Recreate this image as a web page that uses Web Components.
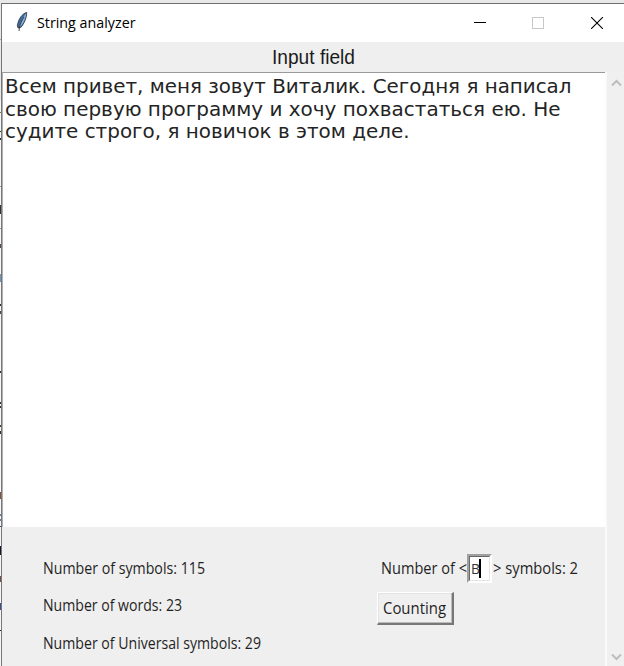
<!DOCTYPE html>
<html lang="en">
<head>
<meta charset="utf-8">
<title>String analyzer</title>
<style>
html,body{margin:0;height:100%;overflow:hidden}
body{background:#e8e8e8}
</style>
</head>
<body>
<analyzer-desktop></analyzer-desktop>
<script>
const define = (name, html, setup) => customElements.define(name, class extends HTMLElement {
  connectedCallback() {
    if (this.shadowRoot) return;
    const t = document.createElement('template');
    t.innerHTML = html;
    this.attachShadow({mode: 'open'}).append(t.content.cloneNode(true));
    if (setup) setup(this, this.shadowRoot);
  }
});

/* One line of text condensed or widened to the advance given in "w". */
define('fit-text', `<style>
:host{display:block;white-space:nowrap;flex:none}
span{display:inline-block;transform-origin:0 50%}
</style><span><slot></slot></span>`, (host, root) => {
  const w = +host.getAttribute('w');
  const s = root.querySelector('span');
  host.style.width = w + 'px';
  s.style.transform = 'scaleX(' + w / s.getBoundingClientRect().width + ')';
});

define('title-bar', `<style>
:host{display:flex;height:38px;background:#fff;align-items:center;color:#000;font:15px/20px "Open Sans","Noto Sans",sans-serif}
.icon{width:16px;height:22px;margin:-2px 7px 0 12px}
fit-text{margin-top:-2px}
.gap{flex:1}
.ctl{width:58.5px;display:flex;justify-content:center;position:relative;left:2px}
</style>
<svg class="icon" viewBox="0 0 16 22"><path d="M12.7 1.5C8.2 2.6 4.3 8 3.3 14.8l.8 2.2 2.6-.5c3.4-3.6 6-9.6 6-15Z" fill="#3f6a9b"/><path d="M12.3 1.8C9.6 5 7.4 9.5 5.3 15l1.3.8c3.4-3.8 6-9 5.7-14Z" fill="#86add6"/><path d="M12.7 1.5C8.2 2.6 4.3 8 3.3 14.8l.8 2.2 2.6-.5c3.4-3.6 6-9.6 6-15Z" fill="none" stroke="#26313f" stroke-width=".8"/><path d="M10 6C7.7 9.5 5.8 13 5 20" fill="none" stroke="#1c222c" stroke-width=".8"/></svg>
<fit-text w="98.5"><slot></slot></fit-text><div class="gap"></div>
<div class="ctl"><svg width="12" height="12"><path d="M0 5.5h12" stroke="#000"/></svg></div>
<div class="ctl"><svg width="12" height="12"><rect x=".5" y=".5" width="11" height="11" fill="none" stroke="#c8c8c8"/></svg></div>
<div class="ctl"><svg width="12" height="12"><path d="M0 0l12 12M12 0L0 12" stroke="#000" stroke-width="1.1"/></svg></div>`);

define('field-heading', `<style>
:host{display:flex;justify-content:center;height:30px;background:#efefef;color:#1b1b1b;font:20px/31px "Liberation Sans",Arial,sans-serif}
</style><fit-text w="83"><slot></slot></fit-text>`);

define('text-area', `<style>
:host{display:block;box-sizing:border-box;height:455px;background:#fff;border-top:1px solid #9a9a9a;border-left:1px solid #b0b0b0;padding:3px 0 0 1.5px;color:#242424;font:19.3px/22.7px "DejaVu Sans",sans-serif}
</style><slot></slot>`);

define('scroll-bar', `<style>
:host{display:flex;flex-direction:column;justify-content:space-between;align-items:center;box-sizing:border-box;width:19px;border-left:2px solid #fafafa;background:#f0f0f0;padding:7px 0 5px 1px}
</style>
<svg width="11" height="8"><path d="M1 6.5l4.5-4.5L10 6.5" fill="none" stroke="#bdbdbd" stroke-width="2"/></svg>
<svg width="11" height="8"><path d="M1 1.5L5.5 6 10 1.5" fill="none" stroke="#bdbdbd" stroke-width="2"/></svg>`);

define('char-entry', `<style>
:host{display:flex;flex:none;box-sizing:border-box;width:25px;height:29px;border:2px solid;border-color:#a0a0a0 #fff #fff #a0a0a0;background:#fff;color:#333;font:15px/24px "Open Sans",sans-serif}
.in{flex:1;display:flex;align-items:center;border:1px solid;border-color:#696969 #e6e6e6 #e6e6e6 #696969;padding-left:1px}
fit-text{margin-top:-2px}
i{width:2.5px;height:19px;background:#000;margin-left:-1px;flex:none}
</style><div class="in"><fit-text w="9"><slot></slot></fit-text><i></i></div>`);

define('push-button', `<style>
:host{display:flex;box-sizing:border-box;width:77px;height:33px;margin-left:1px;border:solid;border-width:1px 2px 2px 1px;border-color:#fff #777 #777 #fff;box-shadow:inset -1px -1px #bbb,inset 1px 1px #e3e3e3;padding-left:5px;line-height:32px}
</style><fit-text w="63"><slot></slot></fit-text>`);

define('stats-panel', `<style>
:host{display:flex;flex:1;background:#efefef;color:#1f1f1f;font:15.4px/20px "Open Sans","Noto Sans",sans-serif}
.left{width:333px;padding:31.5px 0 0 41px;display:flex;flex-direction:column;gap:17.5px}
.right{padding-top:27px;display:flex;flex-direction:column;gap:9px}
.row{display:flex;height:29px;padding-left:4.5px}
.row>fit-text{padding-top:4.5px}
char-entry{margin:0 1px 0 0}
</style>
<div class="left">
<fit-text w="162">Number of symbols: 115</fit-text>
<fit-text w="139">Number of words: 23</fit-text>
<fit-text w="218">Number of Universal symbols: 29</fit-text>
</div>
<div class="right">
<div class="row"><fit-text w="86">Number of &lt;</fit-text><char-entry>В</char-entry><fit-text w="85">&gt; symbols: 2</fit-text></div>
<push-button>Counting</push-button>
</div>`);

/* Slivers of the document that lies behind the window's left edge. */
define('behind-strip', `<style>:host{display:block;width:2px;background:#f7f7f7}svg{display:block}</style>
<svg width="2" height="666"></svg>`, (host, root) => {
  const marks = [[39,1,'#aaa'],[112,1,'#777'],[131,1,'#333'],[138,2,'#333'],[186,1,'#999'],[205,9,'#333'],[228,1,'#999'],[244,4,'#5d4a49'],[274,8,'#7295bd'],[304,2,'#333'],[311,3,'#5a4639'],[371,2,'#26354c'],[402,2,'#333'],[406,2,'#333'],[425,2,'#5b3c24'],[431,3,'#333'],[492,7,'#8b5040'],[514,2,'#6580aa'],[519,2,'#6580aa'],[526,1,'#26436f'],[546,9,'#17172b'],[576,6,'#77514f'],[603,7,'#3b4f91'],[630,1,'#222']];
  root.querySelector('svg').innerHTML = '<rect width="2" height="100" fill="#e8e8e8"/>' +
    marks.map(([y, h, c]) => `<rect y="${y}" width="2" height="${h}" fill="${c}"/>`).join('');
});

define('app-window', `<style>
:host{display:flex;flex-direction:column;flex:1;box-sizing:border-box;border-top:1px solid #6e6e6e;margin-top:3px;background:#efefef;box-shadow:-1px 0 #777}
.body{flex:1;display:grid;grid-template-columns:1fr 19px;grid-template-rows:30px 1fr}
field-heading{grid-column:1/3}
.main{display:flex;flex-direction:column}
</style>
<title-bar>String analyzer</title-bar>
<div class="body">
<field-heading>Input field</field-heading>
<div class="main">
<text-area><fit-text w="566.5">Всем привет, меня зовут Виталик. Сегодня я написал</fit-text><fit-text w="555.5">свою первую программу и хочу похвастаться ею. Не</fit-text><fit-text w="404.5">судите строго, я новичок в этом деле.</fit-text></text-area>
<stats-panel></stats-panel>
</div>
<scroll-bar></scroll-bar>
</div>`);

define('analyzer-desktop', `<style>:host{display:flex;width:624px;height:666px;overflow:hidden}</style>
<behind-strip></behind-strip><app-window></app-window>`);
</script>
</body>
</html>
